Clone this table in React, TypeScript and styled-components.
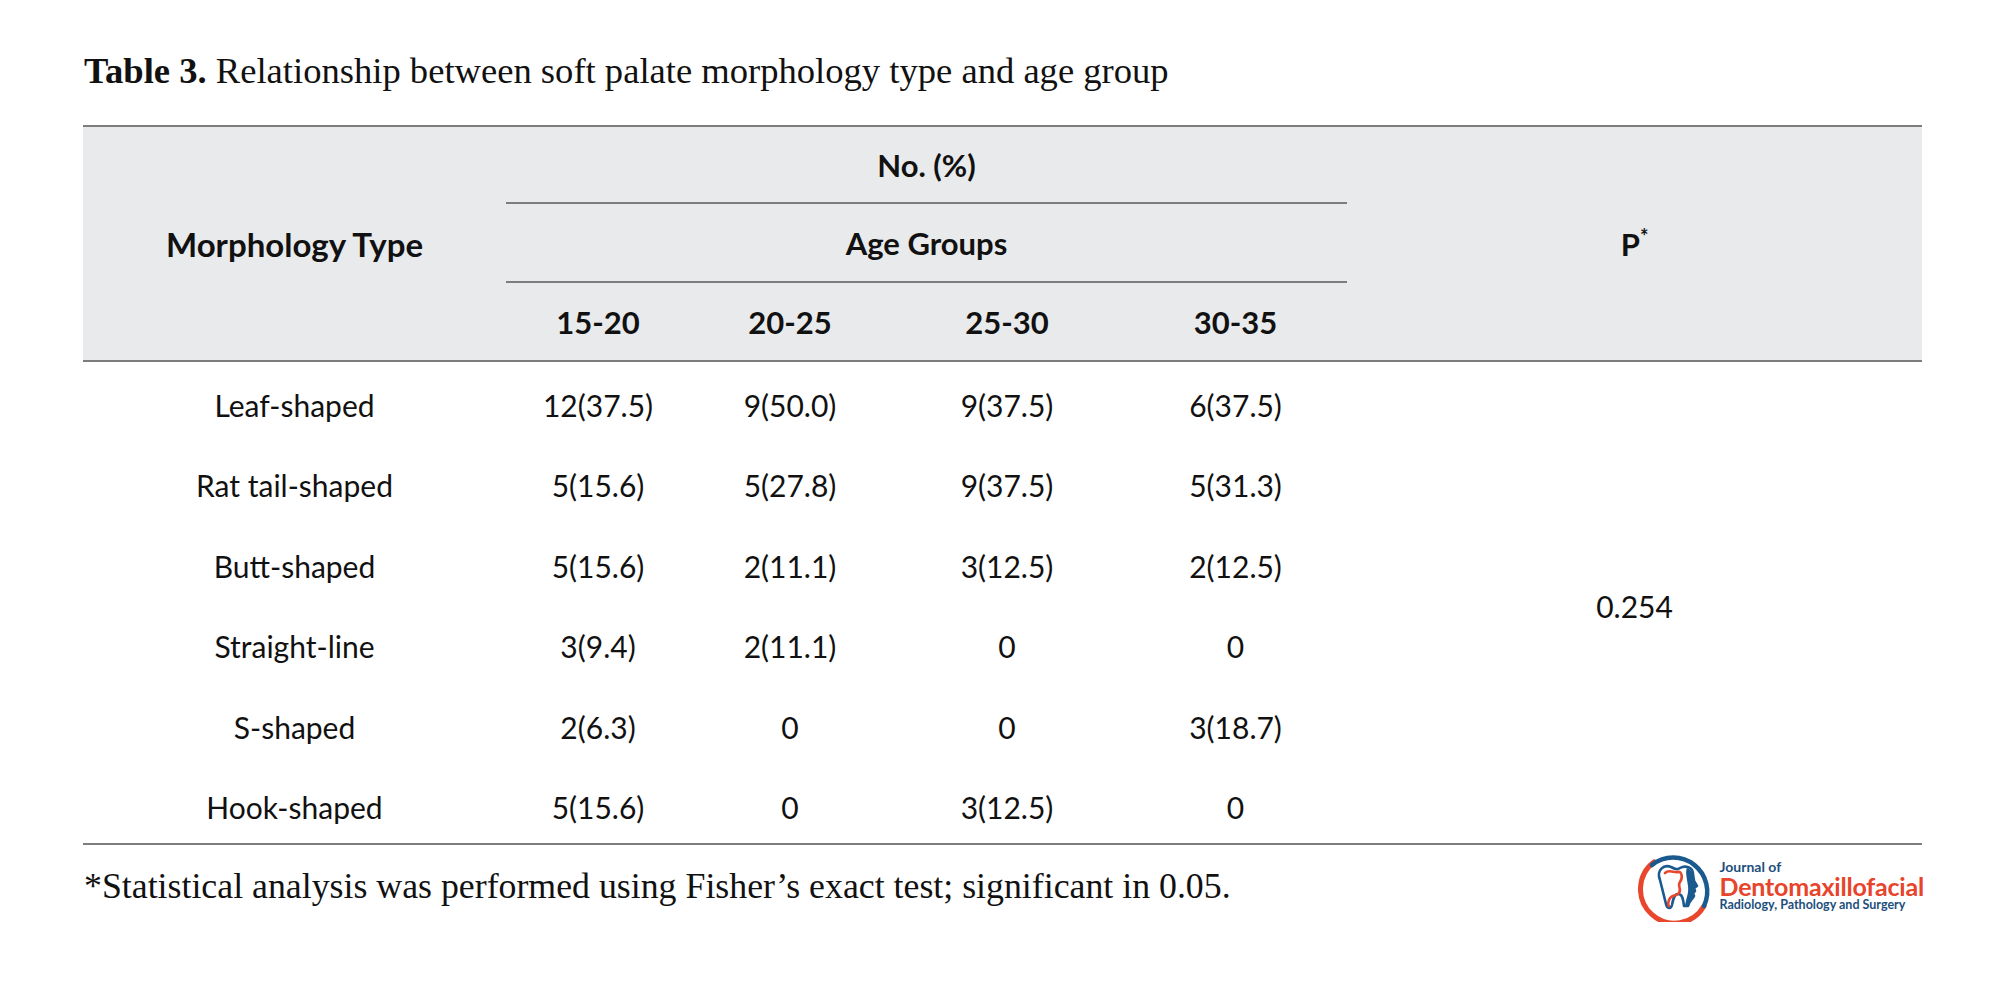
import React from 'react';
import styled, { createGlobalStyle } from 'styled-components';

type Row = {
  type: string;
  values: string[];
};

const rows: Row[] = [
  { type: 'Leaf-shaped', values: ['12(37.5)', '9(50.0)', '9(37.5)', '6(37.5)'] },
  { type: 'Rat tail-shaped', values: ['5(15.6)', '5(27.8)', '9(37.5)', '5(31.3)'] },
  { type: 'Butt-shaped', values: ['5(15.6)', '2(11.1)', '3(12.5)', '2(12.5)'] },
  { type: 'Straight-line', values: ['3(9.4)', '2(11.1)', '0', '0'] },
  { type: 'S-shaped', values: ['2(6.3)', '0', '0', '3(18.7)'] },
  { type: 'Hook-shaped', values: ['5(15.6)', '0', '3(12.5)', '0'] }
];

const ageGroups = ['15-20', '20-25', '25-30', '30-35'];
const colWidths = [423, 184, 200, 234, 223, 575];

const GlobalStyle = createGlobalStyle`
  body {
    margin: 0;
    background: #ffffff;
  }
`;

const Page = styled.div`
  width: 1839px;
  padding: 49px 0 0 83px;
  display: flex;
  flex-direction: column;
`;

const Title = styled.h1`
  font-family: 'Liberation Serif', serif;
  font-weight: 400;
  font-size: 36.6px;
  line-height: 44px;
  color: #111;
  margin: 0 0 32px 1px;
  padding: 0;

  strong {
    font-weight: 700;
  }
`;

const Table = styled.table`
  width: 1839px;
  table-layout: fixed;
  border-collapse: collapse;
  border-top: 2px solid #7d7d7d;
  border-bottom: 2px solid #7d7d7d;
  font-family: Lato, 'Open Sans', sans-serif;
  color: #111;
`;

const Head = styled.thead`
  background: #e9eaec;
  border-bottom: 2px solid #7d7d7d;
`;

const HeadCell = styled.th<{ $line?: boolean; $h?: number; $big?: boolean }>`
  font-size: ${({ $big }) => ($big ? 33 : 31)}px;
  font-weight: 700;
  text-align: center;
  vertical-align: middle;
  padding: 0;
  box-sizing: border-box;
  height: ${({ $h }) => ($h ? `${$h}px` : 'auto')};
  border-bottom: ${({ $line }) => ($line ? '2px solid #7d7d7d' : 'none')};

  sup {
    font-size: 20px;
    vertical-align: 12px;
    line-height: 0;
  }
`;

const Cell = styled.td`
  font-size: 30px;
  font-weight: 400;
  text-align: center;
  vertical-align: middle;
  box-sizing: border-box;
  height: 80.5px;
  padding: 7px 0 0;
`;

const Footer = styled.div`
  width: 1839px;
  height: 72px;
  margin-top: 5px;
  display: flex;
  align-items: center;
  justify-content: space-between;
`;

const Note = styled.p`
  font-family: 'Liberation Serif', serif;
  font-size: 35.8px;
  color: #111;
  margin: 0 0 0 1px;
`;

const Logo = styled.div`
  display: flex;
  align-items: center;
  gap: 5px;
  margin-right: -2px;
`;

const LogoText = styled.div`
  display: flex;
  flex-direction: column;
  font-family: Lato, 'Open Sans', sans-serif;
  font-weight: 700;
  color: #1d4f7c;
`;

const LogoSmall = styled.span<{ $size: number }>`
  font-size: ${({ $size }) => $size}px;
  line-height: ${({ $size }) => $size + 2}px;
  white-space: nowrap;
`;

const LogoBig = styled.span`
  font-size: 25px;
  line-height: 23px;
  color: #e8432b;
  letter-spacing: -0.2px;
  white-space: nowrap;
`;

const LogoMark = () => (
  <svg width="76" height="76" viewBox="0 0 76 76">
    <path
      d="M16 14 A34 34 0 1 0 66 58"
      fill="none"
      stroke="#e8472d"
      strokeWidth="5"
      strokeLinecap="round"
    />
    <path
      d="M14 17 A34 34 0 0 1 66 58"
      fill="none"
      stroke="#1b5a8e"
      strokeWidth="4.5"
      strokeLinecap="round"
    />
    <path
      d="M22 32 C18 22 26 16 33 19 C37 21 39 22 42 20 C47 17 55 19 55 26
         L56 33 L59 38 L56 40 L57 43 L55 45 L56 48 C54 52 51 53 50 58
         L46 58 C45 50 44 46 40 46 C36 46 35 52 34 57 C33 61 29 61 28 56
         C26 48 24 40 22 32 Z"
      fill="none"
      stroke="#1b5a8e"
      strokeWidth="2.6"
      strokeLinejoin="round"
    />
    <path
      d="M49 20 C54 22 55 26 55 30 L56 33 L59 38 L56 40 L57 43 L55 45 L56 48 C54 52 51 53 50 58 L47 58 C48 50 51 46 50 38 C49 30 47 24 49 20 Z"
      fill="#1b5a8e"
    />
    <path
      d="M27 25 C31 21 36 25 40 24 C44 23 45 30 42 34 C39 38 44 41 41 45 C38 49 33 46 31 52 C30 55 30 57 31 58"
      fill="none"
      stroke="#e8472d"
      strokeWidth="2.6"
      strokeLinecap="round"
    />
  </svg>
);

const App: React.FunctionComponent = () => {
  return (
    <Page>
      <GlobalStyle />
      <Title>
        <strong>Table 3.</strong> Relationship between soft palate morphology
        type and age group
      </Title>
      <Table>
        <colgroup>
          {colWidths.map((w, i) => (
            <col key={i} style={{ width: w }} />
          ))}
        </colgroup>
        <Head>
          <tr>
            <HeadCell rowSpan={3} $big>
              Morphology Type
            </HeadCell>
            <HeadCell colSpan={4} $line $h={77}>
              No. (%)
            </HeadCell>
            <HeadCell rowSpan={3}>
              P<sup>*</sup>
            </HeadCell>
          </tr>
          <tr>
            <HeadCell colSpan={4} $line $h={79}>
              Age Groups
            </HeadCell>
          </tr>
          <tr>
            {ageGroups.map(g => (
              <HeadCell key={g} $h={79}>
                {g}
              </HeadCell>
            ))}
          </tr>
        </Head>
        <tbody>
          {rows.map((row, i) => (
            <tr key={row.type}>
              <Cell>{row.type}</Cell>
              {row.values.map((v, j) => (
                <Cell key={j}>{v}</Cell>
              ))}
              {i === 0 && <Cell rowSpan={rows.length}>0.254</Cell>}
            </tr>
          ))}
        </tbody>
      </Table>
      <Footer>
        <Note>
          *Statistical analysis was performed using Fisher’s exact test;
          significant in 0.05.
        </Note>
        <Logo>
          <LogoMark />
          <LogoText>
            <LogoSmall $size={14}>Journal of</LogoSmall>
            <LogoBig>Dentomaxillofacial</LogoBig>
            <LogoSmall $size={12.5}>Radiology, Pathology and Surgery</LogoSmall>
          </LogoText>
        </Logo>
      </Footer>
    </Page>
  );
};

export default App;
